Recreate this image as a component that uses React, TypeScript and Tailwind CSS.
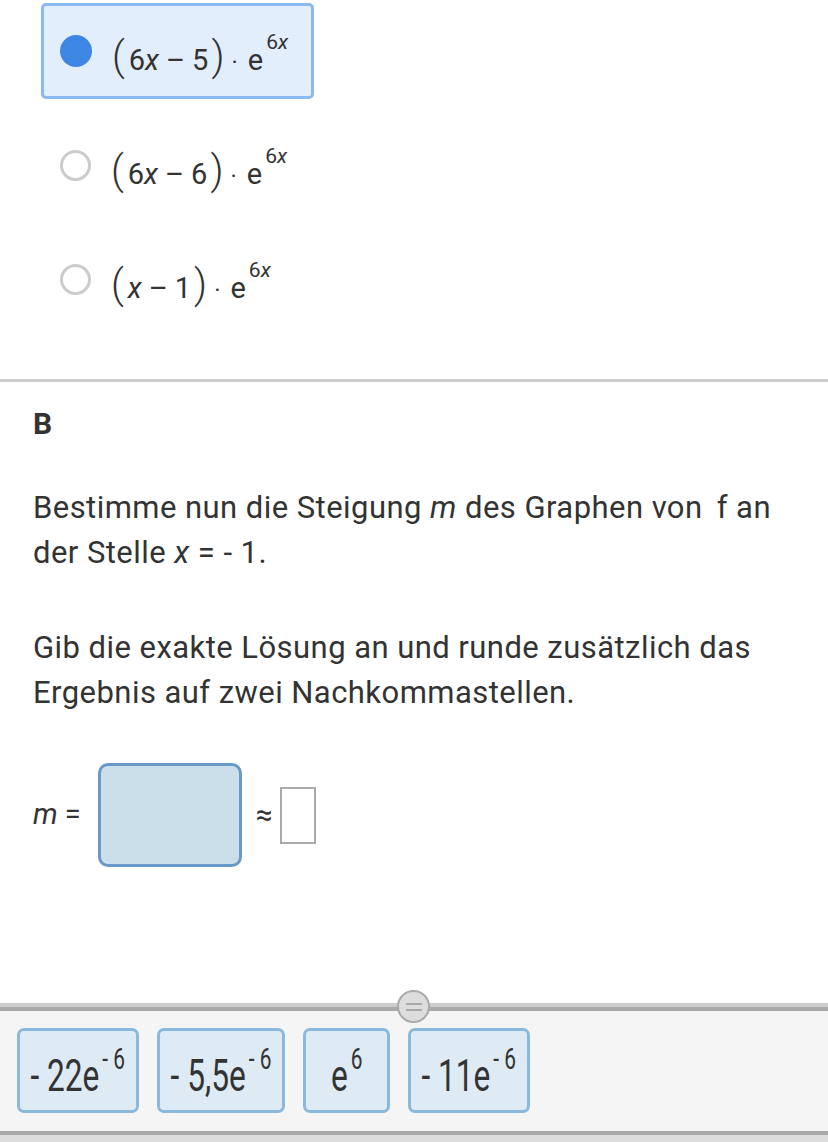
import type { ReactNode } from "react";

interface OptionProps {
  selected?: boolean;
  children: ReactNode;
}

function Option({ selected, children }: OptionProps) {
  return (
    <div
      className={
        selected
          ? "flex h-[96px] w-[273px] items-center gap-[20px] rounded-[5px] border-[3px] border-[#8bbaf0] bg-[#e2eefb] pl-[16px]"
          : "flex h-[96px] w-[273px] items-center gap-[20px] rounded-[5px] border-[3px] border-transparent pl-[16px]"
      }
    >
      {selected ? (
        <span className="h-[32px] w-[32px] shrink-0 rounded-full bg-[#3d86e3]" />
      ) : (
        <span className="h-[31px] w-[31px] shrink-0 rounded-full border-[3px] border-[#cccccc]" />
      )}
      <span className="mt-[12px] flex items-baseline whitespace-nowrap text-[29px] leading-none">{children}</span>
    </div>
  );
}

function Paren({ c }: { c: string }) {
  return <span className="text-[40px] font-light leading-none">{c}</span>;
}

function Minus() {
  return <span className="mx-[7px]">–</span>;
}

function ExpTail() {
  return (
    <>
      <span className="ml-[7px] mr-[10px] text-[24px]">·</span>
      <span>e</span>
      <span className="relative -top-[21px] ml-[3px] text-[21px]">
        6<i>x</i>
      </span>
    </>
  );
}

interface TileProps {
  width: string;
  children: ReactNode;
}

function Tile({ width, children }: TileProps) {
  return (
    <div
      className={`flex h-[85px] ${width} items-center justify-center rounded-[7px] border-[3px] border-[#89b9dd] bg-[#deebf5]`}
    >
      <span className="mt-[10px] inline-block origin-center scale-x-[0.72] whitespace-nowrap text-[44px] leading-none">
        {children}
      </span>
    </div>
  );
}

function Sup({ children }: { children: ReactNode }) {
  return <span className="relative -top-[22px] ml-[4px] text-[29px]">{children}</span>;
}

export default function App() {
  return (
    <div className="relative flex h-[1142px] w-[828px] flex-col overflow-hidden bg-white font-['Roboto',sans-serif] text-[#333333]">
      <div className="flex flex-col gap-[18px] pl-[41px] pt-[3px]">
        <Option selected>
          <Paren c="(" />
          <span className="ml-[4px]">6</span>
          <i>x</i>
          <Minus />
          <span className="mr-[3px]">5</span>
          <Paren c=")" />
          <ExpTail />
        </Option>
        <Option>
          <Paren c="(" />
          <span className="ml-[4px]">6</span>
          <i>x</i>
          <Minus />
          <span className="mr-[3px]">6</span>
          <Paren c=")" />
          <ExpTail />
        </Option>
        <Option>
          <Paren c="(" />
          <i className="ml-[4px]">x</i>
          <Minus />
          <span className="mr-[3px]">1</span>
          <Paren c=")" />
          <ExpTail />
        </Option>
      </div>

      <div className="mt-[52px] h-[3px] bg-[#cccccc]" />

      <div className="px-[33px]">
        <div className="mt-[24px] text-[30px] font-bold leading-[36px]">B</div>

        <p className="mt-[43px] text-[31px] leading-[45px] tracking-[0.45px]">
          Bestimme nun die Steigung <i>m</i> des Graphen von <span className="ml-[6px]">f</span> an der Stelle{" "}
          <i>x</i> = - 1.
        </p>
        <p className="mt-[50px] text-[31px] leading-[45px] tracking-[0.45px]">
          Gib die exakte Lösung an und runde zusätzlich das Ergebnis auf zwei Nachkommastellen.
        </p>

        <div className="mt-[48px] flex items-center">
          <span className="text-[29px]">
            <i>m</i> =
          </span>
          <div className="ml-[17px] h-[104px] w-[144px] rounded-[10px] border-[3px] border-[#6899c8] bg-[#cadfea]" />
          <span className="ml-[14px] text-[30px] leading-none">≈</span>
          <div className="ml-[7px] h-[57px] w-[36px] border-2 border-[#aaaaaa] bg-white" />
        </div>
      </div>

      <div className="relative mt-auto">
        <div className="h-[4px] bg-[#cccccc]" />
        <div className="h-[4px] bg-[#aaaaaa]" />
        <div className="flex h-[120px] gap-[18px] bg-[#f5f5f5] pl-[17px] pt-[17px]">
          <Tile width="w-[122px]">
            - 22e<Sup>- 6</Sup>
          </Tile>
          <Tile width="w-[128px]">
            - 5,5e<Sup>- 6</Sup>
          </Tile>
          <Tile width="w-[87px]">
            e<Sup>6</Sup>
          </Tile>
          <Tile width="w-[122px]">
            - 11e<Sup>- 6</Sup>
          </Tile>
        </div>
        <div className="h-[4px] bg-[#aaaaaa]" />
        <div className="h-[7px] bg-[#dddddd]" />
        <div className="absolute left-[397px] top-[-13px] flex h-[33px] w-[33px] flex-col items-center justify-center gap-[4px] rounded-full border-2 border-[#aaaaaa] bg-[#dddddd]">
          <span className="h-[2px] w-[16px] bg-[#aaaaaa]" />
          <span className="h-[2px] w-[16px] bg-[#aaaaaa]" />
        </div>
      </div>
    </div>
  );
}
